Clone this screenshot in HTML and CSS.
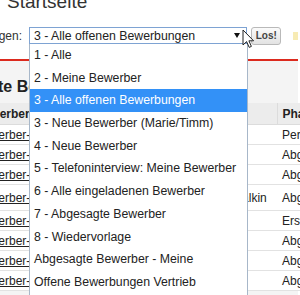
FILE: index.html
```html
<!DOCTYPE html>
<html>
<head>
  <meta charset="UTF-8">
  <title>Startseite</title>
  <link rel="stylesheet" href="styles.css">
</head>
<body>
  <div class="page">
    <h1 class="title">Startseite</h1>
    <form class="filter" onsubmit="return false;">
      <label class="filter-label" for="view">Bewerbungen anzeigen:</label>
      <div class="select" id="view">
        <span class="select-value">3 - Alle offenen Bewerbungen</span>
        <span class="select-arrow"></span>
      </div>
      <button class="go" type="submit">Los!</button>
      <span class="hint"></span>
    </form>

    <div class="panel">
      <h3 class="panel-title">Letzte Bewerbungen</h3>
      <table class="apps">
        <colgroup>
          <col class="c-id">
          <col class="c-job">
          <col class="c-name">
          <col class="c-phase">
        </colgroup>
        <thead>
          <tr><th>Bewerber-ID</th><th>Stelle</th><th>Name</th><th>Phase</th></tr>
        </thead>
        <tbody>
          <tr><td><a href="#">Bewerber-1204</a></td><td>Vertrieb</td><td>Ina Roth</td><td>Persönlich</td></tr>
          <tr><td><a href="#">Bewerber-1203</a></td><td>Support</td><td>Tom Beck</td><td>Abgesagt</td></tr>
          <tr><td><a href="#">Bewerber-1202</a></td><td>Vertrieb</td><td>Jan Wolf</td><td>Abgesagt</td></tr>
          <tr class="tall"><td><a href="#">Bewerber-1201</a></td><td>Entwicklung</td><td>Konstantin Malkin</td><td>Abgesagt</td></tr>
          <tr><td><a href="#">Bewerber-1200</a></td><td>Marketing</td><td>Eva Kern</td><td>Erstgespräch</td></tr>
          <tr><td><a href="#">Bewerber-1199</a></td><td>Support</td><td>Lea Ott</td><td>Abgesagt</td></tr>
          <tr><td><a href="#">Bewerber-1198</a></td><td>Vertrieb</td><td>Max Hahn</td><td>Abgesagt</td></tr>
          <tr><td><a href="#">Bewerber-1197</a></td><td>Einkauf</td><td>Uwe Pohl</td><td>Abgesagt</td></tr>
        </tbody>
      </table>
    </div>
  </div>

  <!-- open list of the select -->
  <ul class="dropdown">
    <li>1 - Alle</li>
    <li>2 - Meine Bewerber</li>
    <li class="active">3 - Alle offenen Bewerbungen</li>
    <li>3 - Neue Bewerber (Marie/Timm)</li>
    <li>4 - Neue Bewerber</li>
    <li>5 - Telefoninterview: Meine Bewerber</li>
    <li>6 - Alle eingeladenen Bewerber</li>
    <li>7 - Abgesagte Bewerber</li>
    <li>8 - Wiedervorlage</li>
    <li>Abgesagte Bewerber - Meine</li>
    <li>Offene Bewerbungen Vertrieb</li>
    <li>Offene Bewerbungen Support</li>
  </ul>

  <svg class="cursor" width="13" height="20" viewBox="0 0 13 20">
    <path d="M1 1 L1 16 L4.6 12.6 L7.2 18.4 L9.4 17.4 L6.9 11.8 L11.6 11.8 Z" fill="#fff" stroke="#222" stroke-width="1" stroke-linejoin="round"/>
  </svg>
</body>
</html>
```

FILE: styles.css
```css
body {
    margin: 0;
    width: 300px;
    height: 295px;
    overflow: hidden;
    background: #fff;
    color: #222;
    font-family: "Liberation Sans", Arial, sans-serif;
    position: relative;
}

.page {
    margin-left: -40px;
    width: 338px;
}

.title {
    margin: -9px 0 0 47px;
    font-size: 19px;
    line-height: 22px;
    font-weight: normal;
    color: #333;
}

.filter {
    display: flex;
    align-items: center;
    height: 17px;
    margin-top: 14px;
}

.filter-label {
    width: 62px;
    margin-right: 7px;
    display: flex;
    justify-content: flex-end;
    white-space: nowrap;
    font-size: 12px;
    color: #333;
}

.select {
    box-sizing: border-box;
    width: 221px;
    height: 17px;
    border: 1px solid #7ea3d3;
    background: #fff;
    display: flex;
    align-items: center;
    padding-left: 4px;
    font-size: 12.3px;
    color: #222;
}

.select-value {
    flex: 1;
}

.select-arrow {
    width: 0;
    height: 0;
    margin-right: 6px;
    border-left: 3px solid transparent;
    border-right: 3px solid transparent;
    border-top: 5px solid #111;
}

.go {
    box-sizing: border-box;
    margin-left: 4px;
    width: 30px;
    height: 18px;
    padding: 0;
    border: 1px solid #b9b9b9;
    border-radius: 3px;
    background: linear-gradient(#fbfbfb, #e2e2e2);
    font-family: inherit;
    font-size: 10px;
    font-weight: bold;
    color: #444;
}

.hint {
    margin-left: 12px;
    width: 5px;
    height: 8px;
    background: #f7ebb4;
}

.panel {
    margin-top: 15px;
    border-top: 2px solid #dc2a1e;
    background: #f4f4f4;
    padding: 16px 0 0 10px;
    height: 240px;
}

.panel-title {
    margin: 0 0 6px -4px;
    font-size: 16px;
    line-height: 20px;
    color: #222;
}

.apps {
    table-layout: fixed;
    width: 330px;
    border-collapse: collapse;
    background: #fff;
    font-size: 12px;
}

.c-id { width: 70px; }
.c-job { width: 127px; }
.c-name { width: 110px; }
.c-phase { width: 23px; }

.apps th,
.apps td {
    padding: 0 5px;
    text-align: left;
    white-space: nowrap;
    overflow: visible;
}

.apps th {
    height: 21px;
    background: #ececec;
    font-weight: bold;
    border-bottom: 1px solid #dcdcdc;
}

.apps th + th {
    border-left: 1px solid #dcdcdc;
}

.apps td {
    height: 19px;
    border-bottom: 1px solid #e2e2e2;
}

.apps tr.tall td {
    height: 25px;
}

.apps a {
    color: #222;
}

.dropdown {
    position: absolute;
    left: 29px;
    top: 44px;
    width: 217px;
    margin: 0;
    padding: 0;
    list-style: none;
    background: #fff;
    border-left: 1px solid #a7b7c9;
    border-right: 1px solid #a7b7c9;
    font-size: 12.3px;
    color: #222;
}

.dropdown li {
    height: 22.7px;
    line-height: 22.7px;
    padding-left: 4px;
    white-space: nowrap;
}

.dropdown li.active {
    background: #3391f7;
    color: #fff;
}

.cursor {
    position: absolute;
    left: 242px;
    top: 29px;
}
```
